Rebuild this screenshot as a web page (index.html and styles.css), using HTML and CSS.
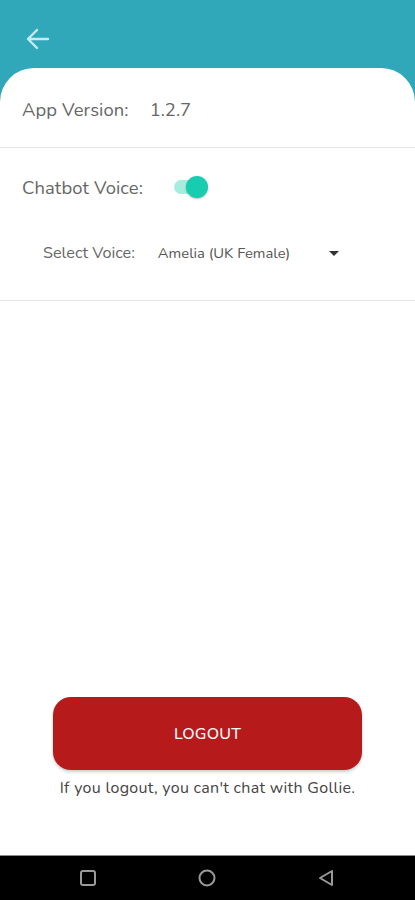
FILE: index.html
```html
<!DOCTYPE html>
<html>
<head>
<meta charset="utf-8">
<link rel="stylesheet" href="styles.css">
</head>
<body>
<div class="screen">
  <header class="topbar">
    <svg class="back" width="24" height="22" viewBox="0 0 24 22"><path d="M22 11H3M11 2L2 11l9 9" fill="none" stroke="#c4ecf1" stroke-width="2.4" stroke-linecap="round" stroke-linejoin="round"/></svg>
  </header>
  <main class="card">
    <section class="row version">
      <span class="label">App Version:</span>
      <span class="value">1.2.7</span>
    </section>
    <section class="row voice">
      <div class="line">
        <span class="label">Chatbot Voice:</span>
        <span class="toggle"><span class="track"></span><span class="thumb"></span></span>
      </div>
      <div class="line select">
        <span class="sublabel">Select Voice:</span>
        <span class="dropdown">Amelia (UK Female)</span>
        <svg class="caret" width="10" height="6" viewBox="0 0 10 6"><path d="M0 0h10L5 5z" fill="#333"/></svg>
      </div>
    </section>
    <div class="spacer"></div>
    <section class="logout">
      <button class="btn">LOGOUT</button>
      <p class="note">If you logout, you can't chat with Gollie.</p>
    </section>
  </main>
  <nav class="navbar">
    <svg width="18" height="18" viewBox="0 0 18 18"><rect x="2" y="2" width="14" height="14" rx="2" fill="none" stroke="#9a9a9a" stroke-width="2"/></svg>
    <svg width="20" height="20" viewBox="0 0 20 20"><circle cx="10" cy="10" r="7.5" fill="none" stroke="#9a9a9a" stroke-width="2"/></svg>
    <svg width="18" height="18" viewBox="0 0 18 18"><path d="M15 2v14L3 9z" fill="none" stroke="#9a9a9a" stroke-width="2" stroke-linejoin="round"/></svg>
  </nav>
</div>
</body>
</html>
```
FILE: styles.css
```css
* { box-sizing: border-box; margin: 0; padding: 0; }
html, body { width: 415px; height: 900px; overflow: hidden; }
body { font-family: "Nunito", "Open Sans", "Noto Sans", sans-serif; background: #fff; }
.screen { display: flex; flex-direction: column; height: 900px; background: #31a8ba; }
.topbar { height: 68px; flex: none; display: flex; align-items: center; padding-left: 26px; padding-top: 10px; }
.back { display: block; }
.card { flex: 1; background: #fff; border-radius: 34px 34px 0 0; display: flex; flex-direction: column; }
.row { border-bottom: 1px solid #e4e4e4; }
.version { height: 80px; display: flex; align-items: center; padding: 3px 22px 0 22px; }
.label { font-size: 18.4px; color: #666; letter-spacing: 0.1px; }
.value { font-size: 18.4px; color: #666; margin-left: 21px; }
.voice { height: 153px; padding: 0 22px; }
.line { display: flex; align-items: center; }
.voice .line:first-child { height: 40px; margin-top: 19px; }
.toggle { position: relative; width: 34px; height: 24px; margin-left: 31px; }
.track { position: absolute; left: 0; top: 5px; width: 32px; height: 14px; border-radius: 7px; background: #a6ecdf; }
.thumb { position: absolute; right: 0; top: 1px; width: 22px; height: 22px; border-radius: 50%; background: #17cdb0; box-shadow: 0 1px 2px rgba(0,0,0,0.25); }
.select { height: 40px; margin-top: 26px; padding-left: 21px; }
.sublabel { font-size: 16.2px; color: #666; }
.dropdown { font-size: 14.8px; color: #555; margin-left: 23px; width: 171px; }
.caret { display: block; margin-top: 1px; }
.spacer { flex: 1; }
.logout { display: flex; flex-direction: column; align-items: center; padding-bottom: 56px; }
.btn { width: 309px; height: 73px; border: none; border-radius: 18px; background: #b71a1a; color: #fff; font-family: inherit; font-size: 16px; font-weight: 500; letter-spacing: 0.2px; box-shadow: 0 2px 3px rgba(0,0,0,0.2); }
.note { margin-top: 7px; font-size: 16px; color: #444; letter-spacing: 0.3px; }
.navbar { height: 45px; flex: none; background: #000; border-top: 1px solid #888; display: flex; align-items: center; justify-content: space-between; padding: 0 80px 0 79px; }
.navbar svg { display: block; }
```
